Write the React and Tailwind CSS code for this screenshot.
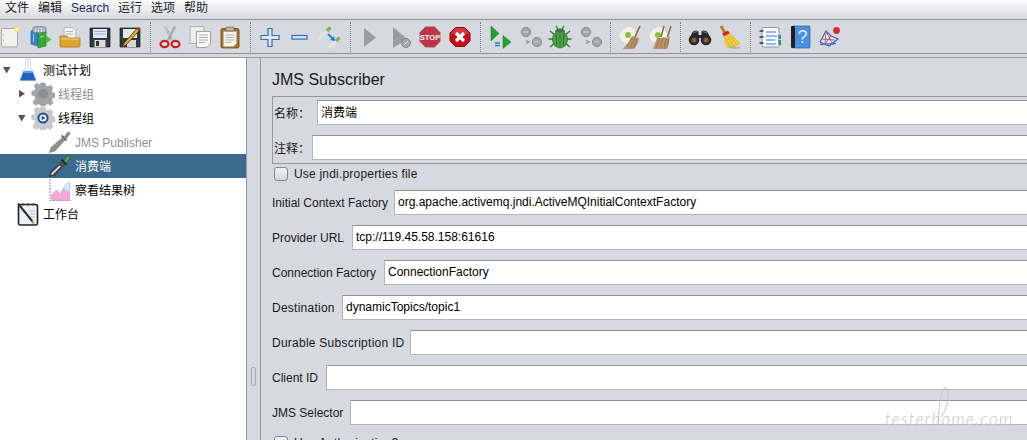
import React from "react";

const Svg = ({ size = 24, children }) => (
  <svg width={size} height={size} viewBox="0 0 24 24" className="shrink-0 block">
    {children}
  </svg>
);

// toolbar icons
const NewIcon = () => (
  <Svg>
    <rect x="3.5" y="3.5" width="16" height="18.5" rx="1.5" fill="#f0f0ec" stroke="#a9aaa6" />
    <circle cx="19" cy="4.5" r="2.8" fill="#f5e57e" />
    <circle cx="19" cy="4.5" r="1.2" fill="#fffbe0" />
    <circle cx="5.5" cy="10" r=".6" fill="#999" />
    <circle cx="5.5" cy="15" r=".6" fill="#999" />
  </Svg>
);
const TemplatesIcon = () => (
  <Svg>
    <path d="M3 6l7-1v16l-7-2z" fill="#2f86cf" stroke="#1d5a92" strokeWidth=".6" />
    <path d="M5 2.5c3-1.5 10-1.5 13 0v5H5z" fill="#a9b7c0" stroke="#66757f" strokeWidth=".7" />
    <path d="M7.5 3.5v4M10.5 3v4M13.5 3v4" stroke="#dfe6ea" strokeWidth=".8" />
    <path d="M10 9l8-2v14l-8 2z" fill="#3aa83a" stroke="#23782a" strokeWidth=".6" />
    <path d="M18 10.5l5.5 4-5.5 4z" fill="#48c048" />
    <path d="M5.5 9v8" stroke="#9cd0f0" />
    <path d="M12 12l4-1" stroke="#9be09b" />
  </Svg>
);
const OpenIcon = () => (
  <Svg>
    <path d="M6 2.5h9l3 3v9H6z" fill="#f2f2ee" stroke="#a5a5a0" strokeWidth=".7" />
    <path d="M8 6.5h7M8 9h7" stroke="#b5b5b0" />
    <path d="M2 11h7l1.5 2H22v8a1 1 0 0 1-1 1H3a1 1 0 0 1-1-1z" fill="#dca52f" stroke="#a87718" strokeWidth=".8" />
    <path d="M3 14h18" stroke="#f3d27a" />
  </Svg>
);
const SaveIcon = () => (
  <Svg>
    <path d="M2 3h20v19H2z" fill="#34373b" stroke="#1e2023" strokeWidth=".7" />
    <rect x="5" y="4" width="14" height="9" fill="#dfe8f1" />
    <path d="M6.5 6.5h11M6.5 9h11" stroke="#8db4d8" />
    <rect x="6.5" y="15" width="11" height="7" fill="#d8d8d8" />
    <rect x="8" y="16" width="3" height="5" fill="#333" />
  </Svg>
);
const SaveAsIcon = () => (
  <Svg>
    <path d="M2 3h20v19H2z" fill="#34373b" stroke="#1e2023" strokeWidth=".7" />
    <rect x="5" y="4" width="14" height="9" fill="#dfe8f1" />
    <rect x="9" y="15" width="9" height="7" fill="#d8d8d8" />
    <path d="M19 3.5L6 18l-2 4 4-2L21 6z" fill="#e3ad22" stroke="#3a2a08" strokeWidth=".8" />
    <path d="M19 3.5l2 2.5 1.2-1.5-1.5-2.2z" fill="#d13b30" />
  </Svg>
);
const CutIcon = () => (
  <Svg>
    <path d="M7 1.5l7.5 14.5M17 1.5L9.500 16" stroke="#a9aaaa" strokeWidth="2.4" fill="none" />
    <path d="M7 1.5l7.5 14.5" stroke="#d8d8d8" strokeWidth=".8" />
    <circle cx="12" cy="12" r=".8" fill="#666" />
    <ellipse cx="6.5" cy="19" rx="4" ry="3.2" fill="none" stroke="#c81e1e" strokeWidth="2.2" />
    <ellipse cx="17.5" cy="19" rx="4" ry="3.2" fill="none" stroke="#c81e1e" strokeWidth="2.2" />
  </Svg>
);
const CopyIcon = () => (
  <Svg>
    <rect x="2" y="1.5" width="14" height="17" fill="#ecece9" stroke="#b0b0ad" />
    <path d="M8.5 6.5h14v12l-4 4h-10z" fill="#f7f7f5" stroke="#a2a29f" />
    <path d="M11 10h9M11 12.5h9M11 15h9M11 17.5h6" stroke="#9a9a98" strokeWidth=".8" />
  </Svg>
);
const PasteIcon = () => (
  <Svg>
    <rect x="3" y="3.5" width="18" height="19.5" rx="1.5" fill="#a96f25" stroke="#6d4514" strokeWidth=".8" />
    <path d="M5.5 6.5h13v12l-3 3h-10z" fill="#f6f6f3" />
    <rect x="8" y="2" width="8" height="4" rx="1" fill="#b6b6b2" stroke="#60605c" strokeWidth=".7" />
    <path d="M7.5 10h9M7.5 12.5h9M7.5 15h9M7.5 17.5h6" stroke="#9a9a98" strokeWidth=".8" />
  </Svg>
);
const PlusIcon = () => (
  <Svg>
    <path d="M10 3.5h4v7h7v4h-7v7h-4v-7H3v-4h7z" fill="#dce8f6" stroke="#2f6fb5" strokeWidth="1.2" />
  </Svg>
);
const MinusIcon = () => (
  <Svg>
    <rect x="4" y="10.5" width="15" height="3.6" fill="#dce8f6" stroke="#2f6fb5" strokeWidth="1.2" />
  </Svg>
);
const ToggleIcon = () => (
  <Svg>
    <path d="M1 14L9 6" stroke="#e6e6e6" strokeWidth="2.4" />
    <path d="M9 6l3.5-3.5" stroke="#7fb25c" strokeWidth="3.2" />
    <path d="M11 23l7-7" stroke="#e8e8e8" strokeWidth="2.4" />
    <path d="M18 16l3.5-3.5" stroke="#7fb25c" strokeWidth="3.2" />
    <path d="M10 9l5 5" stroke="#1f7fe0" strokeWidth="1.8" />
    <path d="M17 16l-5-1 4-4z" fill="#1f7fe0" />
  </Svg>
);
const PlayIcon = () => (
  <Svg>
    <path d="M6 3l12 9.5L6 22z" fill="#9b9c9e" />
  </Svg>
);
const PlayNoTimerIcon = () => (
  <Svg>
    <path d="M5 2l14 12L5 23z" fill="#9b9c9e" />
    <circle cx="18" cy="18" r="4.5" fill="#a9aaac" stroke="#86888a" />
    <path d="M16 20l4-4" stroke="#e2e2e2" />
  </Svg>
);
const StopIcon = () => (
  <Svg>
    <path d="M7.5 1.5h9l6 6v9l-6 6h-9l-6-6v-9z" fill="#c13443" stroke="#a5a6a8" />
    <text x="12" y="14.8" textAnchor="middle" fontSize="7.6" fontWeight="700" fill="#f5f5f5" fontFamily="'Liberation Sans', sans-serif">STOP</text>
  </Svg>
);
const ShutdownIcon = () => (
  <Svg>
    <path d="M7.5 2.5h9l5.5 5.5v8l-5.5 5.5h-9L2 16V8z" fill="#c8101c" stroke="#8d0a12" />
    <path d="M2.5 9l5-6h9l5 6z" fill="#e2505a" opacity=".55" />
    <path d="M8 8l8 8M16 8l-8 8" stroke="#fff" strokeWidth="3.2" />
  </Svg>
);
const RemoteStartIcon = () => (
  <Svg>
    <path d="M3 1l8 7.5L3 16z" fill="#23a02c" stroke="#147a1e" strokeWidth=".5" />
    <path d="M15 10.5l8 6.5-8 6.5z" fill="#23a02c" stroke="#147a1e" strokeWidth=".5" />
    <path d="M7 18h5M12 20.5H7" stroke="#3c7bd0" strokeWidth="1.3" />
  </Svg>
);
const RemoteGrayIcon = () => (
  <Svg>
    <circle cx="8" cy="7" r="4.6" fill="#a3a4a6" stroke="#8b8c8e" />
    <circle cx="19" cy="17" r="4.6" fill="#a3a4a6" stroke="#8b8c8e" />
    <path d="M5.5 7h5" stroke="#d0d0d0" />
    <path d="M16.5 17h5" stroke="#d0d0d0" />
    <path d="M8 15.5l3 1.5-3 1.5" stroke="#8b8c8e" strokeWidth="1.2" fill="none" />
  </Svg>
);
const BugIcon = () => (
  <Svg>
    <path d="M2 6l5 4M22 6l-5 4M0.5 14H6M23.5 14H18M2 22l5-4M22 22l-5-4M8 1l2.5 4M16 1l-2.5 4" stroke="#3f6e38" strokeWidth="1.3" />
    <ellipse cx="12" cy="6.5" rx="5" ry="3" fill="#2e7a30" />
    <ellipse cx="12" cy="14.5" rx="7.5" ry="8.5" fill="#4ba24a" stroke="#2f6d30" strokeWidth=".7" />
    <path d="M12 7v16M8.5 9v12M15.5 9v12" stroke="#2b6b2d" strokeWidth=".9" />
  </Svg>
);
const ClearIcon = ({ double }) => (
  <Svg>
    <path d="M5 3h3l1.5-1.5h3L14 3h3v3l2 2v4l-2 2v3h-3l-2 2H8l-3-2H3v-3l-2-2V8l3-2z" fill="#f1f1ea" stroke="#d2d2cc" strokeWidth=".5" />
    <circle cx="10" cy="10" r="3" fill="#86c23c" />
    {double ? (
      <>
        <path d="M16 1l-3 11" stroke="#8d6a3e" strokeWidth="1.5" />
        <path d="M23 1l-3.5 11" stroke="#8d6a3e" strokeWidth="1.5" />
        <path d="M9 13h5l1.5-1 3 1 3-1-.5 6-2 6H5z" fill="#b89268" />
        <path d="M8 23l3.5-10M12 23l3-10M16 23l2.5-10M19 23l2-10" stroke="#8d6a3e" strokeWidth=".7" />
      </>
    ) : (
      <>
        <path d="M22 1l-5 11" stroke="#8d6a3e" strokeWidth="1.7" />
        <path d="M14 11l7 2-1 5-4 6H5l5-6z" fill="#b89268" />
        <path d="M8 23l6-10M12 23l5-10M16 23l3-9" stroke="#8d6a3e" strokeWidth=".7" />
      </>
    )}
  </Svg>
);
const BinocularsIcon = () => (
  <Svg>
    <path d="M4 8c1-2.5 5-3.500 6.500-1.500V10h3V6.500C15 4.500 19 5.500 20 8l3 7H13.500v-2h-3v2H1z" fill="#26282b" />
    <circle cx="6" cy="15" r="5.3" fill="#26282b" />
    <circle cx="18" cy="15" r="5.3" fill="#26282b" />
    <circle cx="6" cy="15" r="2.6" fill="#8a5a2a" />
    <circle cx="18" cy="15" r="2.6" fill="#8a5a2a" />
    <path d="M5.5 7.5l4-1M15 6.500l4 1.500" stroke="#7b7e82" />
  </Svg>
);
const BroomIcon = () => (
  <Svg>
    <path d="M3 1l4 7" stroke="#b0802d" strokeWidth="3" />
    <path d="M4 8.5l6-3 2 3-6 3z" fill="#cf2a2a" />
    <path d="M6 11.5l6-3 10 10c-4 3-10 4-13 3.500z" fill="#f0d23c" stroke="#cfa920" strokeWidth=".6" />
    <path d="M8 13l4 9M10 12l6 9M12 11l7 9" stroke="#c9a21e" strokeWidth=".7" />
    <ellipse cx="17" cy="22.7" rx="6" ry="1.2" fill="#8e8f92" opacity=".5" />
  </Svg>
);
const ListIcon = () => (
  <Svg>
    <rect x="4" y="2.5" width="17" height="19.5" rx="1.5" fill="#f7f9fc" stroke="#8e9299" />
    <path d="M8 7h10M8 11h11M8 15h9M8 19h10" stroke="#2a7be0" strokeWidth="1.2" />
    <path d="M1.5 6h4M1.500 12h4M1.500 18h4" stroke="#35373a" strokeWidth="1.4" />
    <rect x="20.5" y="10" width="2.5" height="4" fill="#3c7bd0" />
    <rect x="20.5" y="15" width="2.5" height="5" fill="#2f9a38" />
  </Svg>
);
const HelpIcon = () => (
  <Svg>
    <rect x="4" y="1" width="18" height="22" rx="1" fill="#4a90de" stroke="#2b5f9a" strokeWidth=".7" />
    <rect x="3" y="1" width="4" height="22" rx="1" fill="#1e2124" />
    <text x="14.5" y="18" textAnchor="middle" fontSize="18" fill="#dce9f8" fontFamily="'Liberation Sans', sans-serif">?</text>
  </Svg>
);
const FunctionIcon = () => (
  <Svg>
    <path d="M2 17L8 6l5 5 7 3-9 7z" fill="#dfe8f6" stroke="#3562b8" strokeWidth="1.1" />
    <path d="M8 6l-1 13M13 11l-6 8M4 14l13 1M8 6l7 14" stroke="#c23a4a" strokeWidth=".8" />
    <path d="M2 19.5l16-1" stroke="#4c76c9" strokeWidth="1.3" />
    <circle cx="18.5" cy="5.5" r="3.4" fill="#d3302c" />
  </Svg>
);

// tree icons
const FlaskIcon = () => (
  <Svg>
    <path d="M9.5 1h5v7.500l6 12c.5 1-.2 2-1.200 2H4.700c-1 0-1.700-1-1.200-2l6-12z" fill="#f0f1f4" stroke="#d2d4d8" strokeWidth=".7" />
    <path d="M7.5 13.5h9l3.500 9H4z" fill="#1f63c5" />
    <ellipse cx="12" cy="14" rx="4.5" ry="1.2" fill="#5aa0e8" />
  </Svg>
);
const Gear = ({ body = "#a3a4a6", rim = "#8e8f91", active }) => (
  <Svg>
    <path
      d="M10 1h4l.7 3 2.500 1 2.600-1.600 2.800 2.800-1.600 2.600 1 2.500 3 .7v4l-3 .7-1 2.500 1.600 2.600-2.800 2.800-2.600-1.600-2.500 1-.7 3h-4l-.7-3-2.500-1-2.600 1.600-2.800-2.800L4.200 17l-1-2.500-3-.7v-4l3-.7 1-2.500L2.600 4 5.400 1.200 8 2.800l1.300-1z"
      fill={body}
      stroke={rim}
      strokeWidth=".5"
      transform="translate(0.6 0) scale(.95)"
    />
    <circle cx="12" cy="12" r="5" fill={rim} />
    {active && <circle cx="12" cy="12" r="5.6" fill="#1d4f92" />}
    {active && <circle cx="12" cy="12" r="3.6" fill="#eef3fa" />}
    {active && <path d="M10.7 9.8l3.600 2.200-3.600 2.200z" fill="#1d4f92" />}
  </Svg>
);
const Dropper = ({ tip, glass = "#8f9092", edge = "#707174", shine }) => (
  <Svg>
    <path d="M1.5 22.5l1.500-5L15 7l2.500 2.500L7 21z" fill={glass} stroke={edge} strokeWidth=".6" />
    {shine && <path d="M3.5 20.5L12 12" stroke="#eef1f3" strokeWidth="1.6" />}
    <path d="M13.5 5.5l5 5" stroke={edge} strokeWidth="2" />
    <path d="M16 7l3.500-4.500c1-1 3-.5 2.500 1.500L18 9z" fill={tip} stroke={edge} strokeWidth=".4" />
  </Svg>
);
const ResultTreeIcon = () => (
  <Svg>
    <path d="M2 1v21.500h21" stroke="#8d8f93" strokeWidth="1" strokeDasharray="2 1" fill="none" />
    <path d="M3.5 21.5V17l5-5 4 4 3-6 6 1v10.500z" fill="#f5a9d8" stroke="#e86fbb" strokeWidth=".5" />
    <path d="M16 11c0-4 3-6 6-6v8c-2 1-5 0-6-2z" fill="#dce9f8" stroke="#96b8e0" strokeWidth=".6" />
  </Svg>
);
const WorkbenchIcon = () => (
  <Svg>
    <rect x="2.5" y="2.5" width="19" height="20.5" rx="2" fill="#eef0f3" stroke="#1f2123" strokeWidth="1.6" />
    <path d="M7 1v3M12 1v3M17 1v3" stroke="#55575a" strokeWidth="1.2" />
    <path d="M13 9h6M14 12h5M14 15h5" stroke="#9fb4cc" strokeWidth=".8" />
    <path d="M2 1.5l14.500 18" stroke="#2c2e31" strokeWidth="2" />
    <path d="M16 19l1.800 2.600" stroke="#c9933a" strokeWidth="2" />
  </Svg>
);

const Tool = ({ children }) => (
  <div className="w-[30px] h-[24px] shrink-0 flex items-center justify-center">{children}</div>
);
const Sep = () => (
  <div className="w-[10px] h-[30px] shrink-0 flex justify-center">
    <div className="h-full border-l border-dotted border-[#777b82]" />
  </div>
);

const TOOLS = [
  [<NewIcon />, <TemplatesIcon />, <OpenIcon />, <SaveIcon />, <SaveAsIcon />],
  [<CutIcon />, <CopyIcon />, <PasteIcon />],
  [<PlusIcon />, <MinusIcon />, <ToggleIcon />],
  [<PlayIcon />, <PlayNoTimerIcon />, <StopIcon />, <ShutdownIcon />],
  [<RemoteStartIcon />, <RemoteGrayIcon />, <BugIcon />, <RemoteGrayIcon />],
  [<ClearIcon />, <ClearIcon double />],
  [<BinocularsIcon />, <BroomIcon />],
  [<ListIcon />, <HelpIcon />, <FunctionIcon />],
];

const Toolbar = () => (
  <div className="h-[34px] shrink-0 -ml-[5px] flex items-center border-b border-[#8f9297]">
    {TOOLS.map((group, i) => (
      <React.Fragment key={i}>
        {i > 0 && <Sep />}
        {group.map((icon, j) => (
          <Tool key={j}>{icon}</Tool>
        ))}
      </React.Fragment>
    ))}
  </div>
);

const MENU = ["文件", "编辑", "Search", "运行", "选项", "帮助"];

const Arrow = ({ open }) => (
  <svg width="8" height="8" viewBox="0 0 8 8" className="block shrink-0">
    {open ? <path d="M0 1h7.500L3.700 7.500z" fill="#55575a" /> : <path d="M1 0v7.500L7 3.700z" fill="#55575a" />}
  </svg>
);

const TreeRow = ({ indent, arrow, icon, label, color = "text-black", selected }) => (
  <div className={`h-[24px] flex items-center relative ${selected ? "bg-[#3a6a8c]" : ""}`} style={{ paddingLeft: indent }}>
    {arrow !== undefined && (
      <span className="absolute top-[8px]" style={{ left: indent - 13 }}>
        <Arrow open={arrow} />
      </span>
    )}
    <span className="w-[24px] h-[24px] shrink-0">{icon}</span>
    <span className={`ml-[3px] pt-[2px] text-[12px] leading-none ${selected ? "text-white" : color}`}>{label}</span>
  </div>
);

// labelWidth keeps each input on the column the reference has it in
const Field = ({ label, value, labelWidth, wide }) => (
  <div className="flex items-center h-[25px] mb-[10px]">
    <span className={`text-[12px] text-[#1a1a1a] whitespace-nowrap shrink-0 ${wide ? "tracking-[0.25px]" : ""}`} style={{ width: labelWidth }}>
      {label}
    </span>
    <Input value={value} />
  </div>
);

const Input = ({ value }) => (
  <div className="flex-1 h-[25px] bg-white border border-[#b4b6ba] border-t-[#8f9195] px-[3px] text-[12px] leading-[23px] text-black whitespace-nowrap">
    {value}
  </div>
);

const Check = ({ label }) => (
  <div className="flex items-center h-[15px] pl-[2px]">
    <span className="w-[14px] h-[14px] rounded-[3px] border border-[#85878b] bg-gradient-to-b from-[#f4f5f7] to-[#d2d5db] shrink-0" />
    <span className="ml-[6px] text-[12px] text-[#1a1a1a] whitespace-nowrap tracking-[0.2px]">{label}</span>
  </div>
);

export default function App() {
  return (
    <div
      className="relative w-[1027px] h-[440px] overflow-hidden bg-[#d6d9df] flex flex-col"
      style={{ fontFamily: "'Liberation Sans', 'Noto Sans CJK SC', sans-serif" }}
    >
      <div className="bg-gradient-to-b from-[#fbfbfc] to-[#d6d9df] h-[20px] shrink-0 flex items-center pl-[5px] pb-[4px] gap-[9px] text-[12px] text-[#1c1c1c] border-b border-[#8f9297]">
        {MENU.map((m) => (
          <span key={m} className={m === "Search" ? "text-[#1d2a58]" : ""}>{m}</span>
        ))}
      </div>
      <Toolbar />
      <div className="h-[3px] shrink-0" />
      <div className="flex-1 min-h-0 flex border-t border-[#96999e]">
        {/* tree */}
        <div className="w-[247px] shrink-0 bg-white border-r border-[#9a9da2]">
          <TreeRow indent={16} arrow={true} icon={<FlaskIcon />} label="测试计划" />
          <TreeRow indent={31} arrow={false} icon={<Gear />} label="线程组" color="text-[#8c8c8c]" />
          <TreeRow indent={31} arrow={true} icon={<Gear body="#c9cacc" rim="#a9aaac" active />} label="线程组" />
          <TreeRow indent={48} icon={<Dropper tip="#87898b" />} label="JMS Publisher" color="text-[#8d8f96]" />
          <TreeRow indent={48} icon={<Dropper tip="#5aa64a" glass="#4b5357" edge="#24292c" shine />} label="消费端" selected />
          <TreeRow indent={48} icon={<ResultTreeIcon />} label="察看结果树" />
          <TreeRow indent={16} icon={<WorkbenchIcon />} label="工作台" />
        </div>
        {/* divider */}
        <div className="w-[13px] shrink-0 flex items-end justify-center pb-[54px]">
          <div className="w-[5px] h-[19px] rounded-[2px] border border-[#a5a8ad]" />
        </div>
        {/* form */}
        <div className="flex-1 min-w-0 overflow-hidden border-l border-[#96999e] pl-[11px]">
          <div className="w-[900px]">
            <div className="pt-[13px] pb-[7px] text-[16px] leading-[18px] text-[#1a1a1a]">JMS Subscriber</div>
            <div className="border border-[#96999e] pt-[3px] pb-[3px] pl-[1px]">
              <div className="flex items-center h-[25px] mb-[10px]">
                <span className="text-[12px] pt-[2px] text-[#1a1a1a] w-[43px] shrink-0">名称：</span>
                <Input value={<span className="relative top-[1px]">消费端</span>} />
              </div>
              <div className="flex items-center h-[25px]">
                <span className="text-[12px] pt-[2px] text-[#1a1a1a] w-[38px] shrink-0">注释：</span>
                <Input value="" />
              </div>
            </div>
            <div className="pt-[2px] pb-[9px]">
              <Check label="Use jndi.properties file" />
            </div>
            <Field labelWidth={122} label="Initial Context Factory" value="org.apache.activemq.jndi.ActiveMQInitialContextFactory" />
            <Field labelWidth={80} label="Provider URL" value="tcp://119.45.58.158:61616" />
            <Field labelWidth={112} label="Connection Factory" value="ConnectionFactory" />
            <Field labelWidth={70} wide label="Destination" value="dynamicTopics/topic1" />
            <Field labelWidth={138} wide label="Durable Subscription ID" value="" />
            <Field labelWidth={54} label="Client ID" value="" />
            <Field labelWidth={78} label="JMS Selector" value="" />
            <Check label="Use Authorization?" />
          </div>
        </div>
      </div>
      {/* watermark */}
      <div className="absolute left-[885px] top-[410px] text-[17px] leading-none tracking-[1.2px] italic text-[#c4c5c7] whitespace-nowrap font-light pointer-events-none" style={{ fontFamily: "Lato, sans-serif" }}>
        testerhome.com
      </div>
      <svg width="20" height="40" viewBox="0 0 20 40" className="absolute left-[933px] top-[386px] pointer-events-none">
        <path d="M5 38C6 24 7 6 11 2c3-2 5 6 4 12-1 7-4 13-7 17" fill="none" stroke="#c4c5c7" strokeWidth="1" />
      </svg>
    </div>
  );
}
